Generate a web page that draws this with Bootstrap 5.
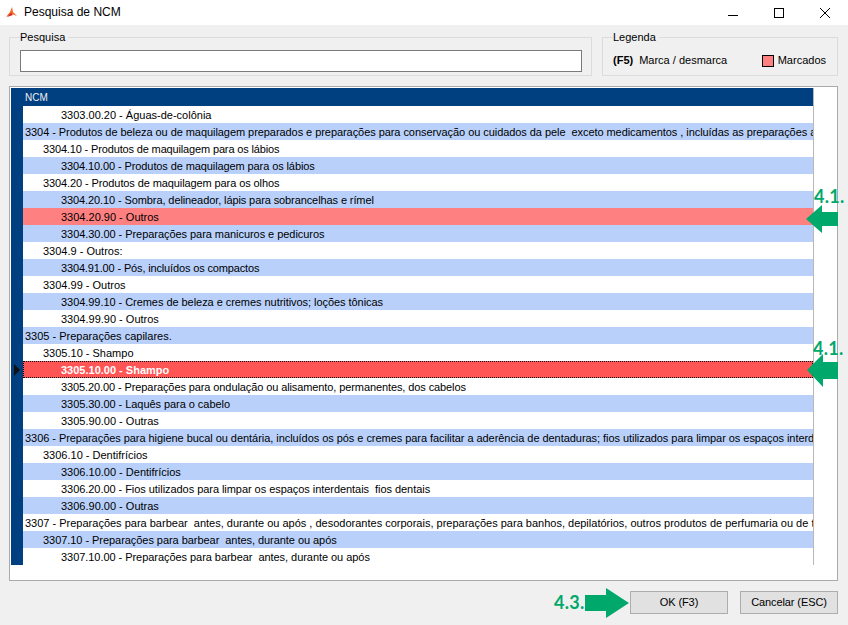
<!DOCTYPE html>
<html lang="pt">
<head>
<meta charset="utf-8">
<title>Pesquisa de NCM</title>
<link href="https://cdn.jsdelivr.net/npm/bootstrap@5.3.0/dist/css/bootstrap.min.css" rel="stylesheet">
<style>
html,body{height:625px;overflow:hidden}
body{background:#f0f0f0;color:#000;font:11px/13px "Liberation Sans",Arial,sans-serif}
.win{position:relative;width:848px;height:625px}
.tbar{height:25px;background:#fff;padding-left:6px}
.tbar-title{margin-left:7px;font-size:12px}
.wbtn{width:46px;height:25px}
.tools{padding:6px 10px 0 9px;gap:10px}
.gbox{border:1px solid #dcdcdc;margin:0;padding:0 10px;height:45px;min-width:0}
.gbox legend{float:none;width:auto;font-size:11px;line-height:13px;margin:0;padding:0 3px 0 0;background:#f0f0f0}
.gbox-search{width:583px}
.gbox-legend{width:236px}
.inp{display:block;width:562px;height:22px;border:1px solid #7a7a7a;border-radius:0;padding:0 3px;font-size:11px;margin-top:6px}
.swatch{width:12px;height:12px;background:#ff8080;border:1px solid #000;margin-right:4px}
.lg-row{margin-top:10px;padding-right:1px}
.lg-key{margin-right:6px}
.gridbox{margin:10px 10px 0 9px;height:495px;border:1px solid #aaa;background:#fff;padding:1px;overflow:hidden}
.side{width:12px;height:477px;background:#004080;position:relative}
.grid{width:791px;height:477px;border-right:1px solid #b8b8b8;overflow:hidden}
.hdr{height:18px;background:#004080;color:#f0f0f0;padding:3px 0 0 2px;font-size:10px}
.rw{height:17px;line-height:19px;white-space:nowrap;overflow:hidden}
.rw.alt{background:#b9d1fa}
.rw.mk{background:#ff8080}
.rw.sel{background:#ff5555;color:#fff;font-weight:700;line-height:17px;border:1px dotted #000}
.t0{letter-spacing:-.06px}.t1{letter-spacing:-.05px}.t2{letter-spacing:-.1px}.t3{letter-spacing:-.15px}
.l1{padding-left:2px}.l2{padding-left:20px}.l3{padding-left:38px}
.sel.l3{padding-left:37px}
.mark-ptr{position:absolute;left:3px;top:276px;width:0;height:0;border-left:6px solid #111;border-top:6px solid transparent;border-bottom:6px solid transparent}
.foot{padding:10px 10px 0 0;gap:12px}
.fbtn{width:98px;height:23px;padding:0 0 2px;background:#e1e1e1;border:1px solid #adadad;border-radius:0;color:#000;font-size:11px;line-height:18px;letter-spacing:-.1px}
.fbtn:hover{background:#e1e1e1;border-color:#adadad;color:#000}
.note{position:absolute;color:#00a86b;font:700 18px/20px Lato,"Liberation Sans",sans-serif;letter-spacing:.3px}
.arrow{position:absolute;display:block}
</style>
</head>
<body>
<div class="win">
  <div class="tbar d-flex align-items-center">
    <svg width="11" height="11" viewBox="0 0 11 11"><path d="M6 0 7 5 11 9 6 7 0 10 4 5Z" fill="#f26a21"/><path d="M1 10 5 6 7 8Z" fill="#d5232a"/></svg>
    <span class="tbar-title">Pesquisa de NCM</span>
    <div class="ms-auto d-flex">
      <div class="wbtn d-flex align-items-center justify-content-center"><svg width="10" height="10" viewBox="0 0 10 10"><path d="M0 7.5H10" stroke="#000" fill="none"/></svg></div>
      <div class="wbtn d-flex align-items-center justify-content-center"><svg width="10" height="10" viewBox="0 0 10 10"><rect x=".5" y=".5" width="9" height="9" stroke="#000" fill="none"/></svg></div>
      <div class="wbtn d-flex align-items-center justify-content-center"><svg width="10" height="10" viewBox="0 0 10 10"><path d="M0 0 10 10M10 0 0 10" stroke="#000" fill="none"/></svg></div>
    </div>
  </div>
  <div class="tools d-flex">
    <fieldset class="gbox gbox-search"><legend>Pesquisa</legend><input class="inp" type="text" aria-label="Pesquisa"></fieldset>
    <fieldset class="gbox gbox-legend"><legend>Legenda</legend>
      <div class="d-flex align-items-center lg-row"><strong class="lg-key">(F5)</strong><span>Marca / desmarca</span><span class="swatch ms-auto"></span><span>Marcados</span></div>
    </fieldset>
  </div>
  <div class="gridbox d-flex">
    <div class="side"><span class="mark-ptr"></span></div>
    <div class="grid">
      <div class="hdr">NCM</div>
      <div class="rw l3">3303.00.20 - Águas-de-colônia</div>
      <div class="rw alt l1 t0">3304 - Produtos de beleza ou de maquilagem preparados e preparações para conservação ou cuidados da pele&nbsp; exceto medicamentos , incluídas as preparações antissolares</div>
      <div class="rw l2 t3">3304.10 - Produtos de maquilagem para os lábios</div>
      <div class="rw alt l3 t2">3304.10.00 - Produtos de maquilagem para os lábios</div>
      <div class="rw l2 t2">3304.20 - Produtos de maquilagem para os olhos</div>
      <div class="rw alt l3 t2">3304.20.10 - Sombra, delineador, lápis para sobrancelhas e rímel</div>
      <div class="rw mk l3">3304.20.90 - Outros</div>
      <div class="rw alt l3 t1">3304.30.00 - Preparações para manicuros e pedicuros</div>
      <div class="rw l2">3304.9 - Outros:</div>
      <div class="rw alt l3 t3">3304.91.00 - Pós, incluídos os compactos</div>
      <div class="rw l2">3304.99 - Outros</div>
      <div class="rw alt l3 t1">3304.99.10 - Cremes de beleza e cremes nutritivos; loções tônicas</div>
      <div class="rw l3">3304.99.90 - Outros</div>
      <div class="rw alt l1">3305 - Preparações capilares.</div>
      <div class="rw l2">3305.10 - Shampo</div>
      <div class="rw sel l3">3305.10.00 - Shampo</div>
      <div class="rw l3 t2">3305.20.00 - Preparações para ondulação ou alisamento, permanentes, dos cabelos</div>
      <div class="rw alt l3 t1">3305.30.00 - Laquês para o cabelo</div>
      <div class="rw l3">3305.90.00 - Outras</div>
      <div class="rw alt l1 t1">3306 - Preparações para higiene bucal ou dentária, incluídos os pós e cremes para facilitar a aderência de dentaduras; fios utilizados para limpar os espaços interdentais</div>
      <div class="rw l2">3306.10 - Dentifrícios</div>
      <div class="rw alt l3">3306.10.00 - Dentifrícios</div>
      <div class="rw l3 t1">3306.20.00 - Fios utilizados para limpar os espaços interdentais&nbsp; fios dentais</div>
      <div class="rw alt l3">3306.90.00 - Outras</div>
      <div class="rw l1">3307 - Preparações para barbear&nbsp; antes, durante ou após , desodorantes corporais, preparações para banhos, depilatórios, outros produtos de perfumaria ou de toucador</div>
      <div class="rw alt l2 t1">3307.10 - Preparações para barbear&nbsp; antes, durante ou após</div>
      <div class="rw l3 t1">3307.10.00 - Preparações para barbear&nbsp; antes, durante ou após</div>
    </div>
  </div>
  <div class="foot d-flex justify-content-end">
    <button type="button" class="btn fbtn">OK (F3)</button>
    <button type="button" class="btn fbtn">Cancelar (ESC)</button>
  </div>
  <span class="note" style="left:814px;top:186px">4.1.</span>
  <span class="note" style="left:813px;top:338px">4.1.</span>
  <span class="note" style="left:554px;top:592px">4.3.</span>
  <svg class="arrow" style="left:0;top:0" width="848" height="625" viewBox="0 0 848 625" aria-hidden="true">
    <path d="M806 219 822 205V212H838V226H822V233Z" fill="#00a86b"/>
    <path d="M807 370 823 354V362H838V379H823V387Z" fill="#00a86b"/>
    <path d="M585 595H606V588L629 603 606 618V611H585Z" fill="#00a86b"/>
  </svg>
</div>
</body>
</html>
